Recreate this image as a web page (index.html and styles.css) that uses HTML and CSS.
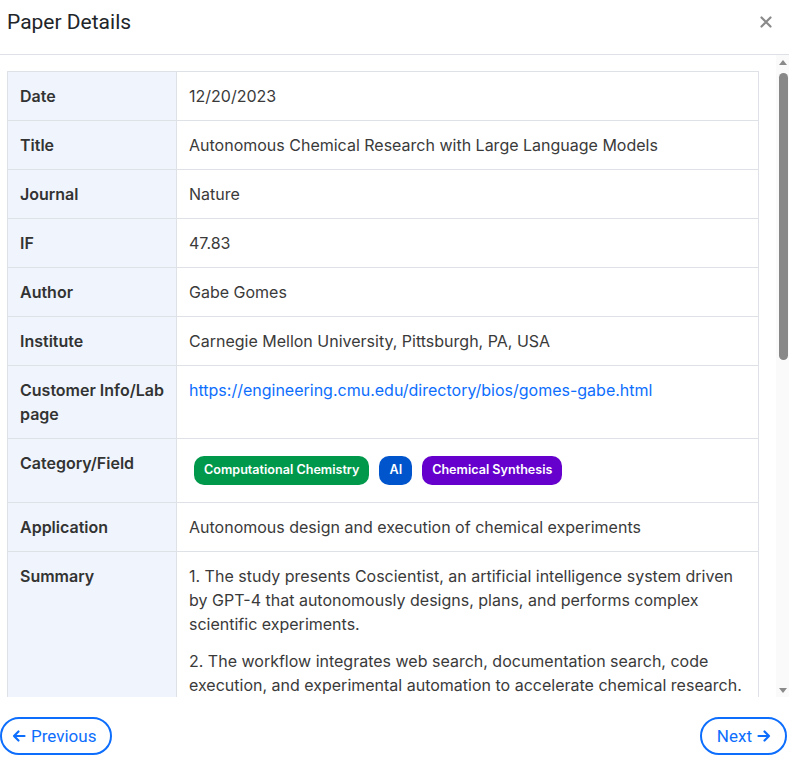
FILE: index.html
```html
<!DOCTYPE html>
<html lang="en">
<head>
<meta charset="utf-8">
<title>Paper Details</title>
<link rel="stylesheet" href="styles.css">
</head>
<body>
<div class="modal">
  <header class="modal-header">
    <h2 class="modal-title">Paper Details</h2>
    <button class="close-btn" aria-label="Close">
      <svg width="12" height="12" viewBox="0 0 12 12"><path d="M1.5 1.5 L10.5 10.5 M10.5 1.5 L1.5 10.5" stroke="#8a8a8a" stroke-width="2.2" stroke-linecap="round"/></svg>
    </button>
  </header>
  <div class="body-wrap">
    <div class="modal-body">
      <table class="details">
        <tbody>
          <tr><th>Date</th><td>12/20/2023</td></tr>
          <tr><th>Title</th><td>Autonomous Chemical Research with Large Language Models</td></tr>
          <tr><th>Journal</th><td>Nature</td></tr>
          <tr><th>IF</th><td>47.83</td></tr>
          <tr><th>Author</th><td>Gabe Gomes</td></tr>
          <tr><th>Institute</th><td>Carnegie Mellon University, Pittsburgh, PA, USA</td></tr>
          <tr><th>Customer Info/Lab page</th><td><a class="link" href="#">https://engineering.cmu.edu/directory/bios/gomes-gabe.html</a></td></tr>
          <tr><th>Category/Field</th><td><div class="tags"><span class="tag tag-green">Computational Chemistry</span><span class="tag tag-blue">AI</span><span class="tag tag-purple">Chemical Synthesis</span></div></td></tr>
          <tr><th>Application</th><td>Autonomous design and execution of chemical experiments</td></tr>
          <tr><th>Summary</th><td>
            <p>1. The study presents Coscientist, an artificial intelligence system driven by GPT-4 that autonomously designs, plans, and performs complex scientific experiments.</p>
            <p>2. The workflow integrates web search, documentation search, code execution, and experimental automation to accelerate chemical research.</p>
            <p>3. Coscientist successfully optimized palladium-catalysed cross-coupling reactions, demonstrating reasoning about reaction conditions and yields.</p>
          </td></tr>
        </tbody>
      </table>
    </div>
    <div class="scrollbar" aria-hidden="true">
      <div class="sb-arrow sb-up"></div>
      <div class="sb-track"><div class="sb-thumb"></div></div>
      <div class="sb-arrow sb-down"></div>
    </div>
  </div>
  <footer class="modal-footer">
    <button class="nav-btn nav-prev">
      <svg width="14" height="14" viewBox="0 0 14 14"><path d="M12.5 7 H2 M6.5 2.5 L2 7 L6.5 11.5" fill="none" stroke="currentColor" stroke-width="2.2" stroke-linecap="round" stroke-linejoin="round"/></svg>
      <span>Previous</span>
    </button>
    <button class="nav-btn nav-next">
      <span>Next</span>
      <svg width="14" height="14" viewBox="0 0 14 14"><path d="M1.5 7 H12 M7.5 2.5 L12 7 L7.5 11.5" fill="none" stroke="currentColor" stroke-width="2.2" stroke-linecap="round" stroke-linejoin="round"/></svg>
    </button>
  </footer>
</div>
</body>
</html>
```
FILE: styles.css
```css
html, body {
  margin: 0;
  padding: 0;
  background: #ffffff;
}

body {
  font-family: Inter, "Noto Sans", sans-serif;
  color: #333333;
}

.modal {
  height: 757px;
  display: flex;
  flex-direction: column;
  background: #ffffff;
}

.modal-header {
  height: 54px;
  flex: 0 0 54px;
  border-bottom: 1px solid #dee2e6;
  display: flex;
  align-items: center;
  justify-content: space-between;
  padding: 0 17px 0 7px;
  box-sizing: content-box;
}

.modal-title {
  margin: 0 0 10px 0;
  font-family: Roboto, "Liberation Sans", sans-serif;
  font-size: 21px;
  font-weight: 400;
  color: #212529;
  line-height: 24px;
}

.close-btn {
  border: 0;
  background: transparent;
  padding: 0;
  margin-bottom: 10px;
  width: 12px;
  height: 12px;
  display: flex;
  cursor: pointer;
}

.body-wrap {
  flex: 1 1 auto;
  min-height: 0;
  display: flex;
}

.modal-body {
  flex: 1 1 auto;
  min-width: 0;
  overflow: hidden;
  padding: 16px 17px 0 7px;
}

.scrollbar {
  flex: 0 0 13px;
  display: flex;
  flex-direction: column;
  background: #fafafa;
}

.sb-arrow {
  flex: 0 0 14px;
  display: flex;
  justify-content: center;
  align-items: center;
}

.sb-arrow::before {
  content: "";
  width: 0;
  height: 0;
  border-left: 4px solid transparent;
  border-right: 4px solid transparent;
  margin-left: 1px;
}

.sb-up::before {
  border-bottom: 5px solid #8a8a8a;
}

.sb-down::before {
  border-top: 5px solid #8a8a8a;
}

.sb-track {
  flex: 1 1 auto;
  padding: 4px 1px 0 3px;
}

.sb-thumb {
  height: 287px;
  background: #888888;
  border-radius: 5px;
}

.details {
  width: 100%;
  border-collapse: collapse;
  font-size: 16px;
  line-height: 24px;
}

.details th,
.details td {
  border: 1px solid #dee2e6;
  padding: 12px;
  text-align: left;
  vertical-align: top;
}

.details th {
  width: 144px;
  background: #f0f5fd;
  font-weight: 600;
  color: #333333;
}

.details td {
  color: #3a3a3a;
  font-weight: 400;
}

.details p {
  margin: 0 0 13px 0;
}

.details p:last-child {
  margin-bottom: 0;
}

.link {
  color: #0d6efd;
  text-decoration: none;
}

.tags {
  display: flex;
  flex-wrap: wrap;
  gap: 10px;
  margin: 5px;
}

.tag {
  display: inline-flex;
  align-items: center;
  height: 29px;
  padding: 0 10px;
  border-radius: 10px;
  color: #ffffff;
  font-size: 12.6px;
  font-weight: 600;
  line-height: 1;
}

.tag-green { background: #00994c; }
.tag-blue { background: #0055cc; }
.tag-purple { background: #6600cc; }

.modal-footer {
  flex: 0 0 auto;
  display: flex;
  justify-content: space-between;
  padding: 20px 2px 2px 0;
}

.nav-btn {
  display: inline-flex;
  align-items: center;
  gap: 5px;
  height: 38px;
  box-sizing: border-box;
  border: 2px solid #0d6efd;
  border-radius: 19px;
  background: #ffffff;
  color: #0d6efd;
  font-family: Roboto, "Liberation Sans", sans-serif;
  font-size: 17px;
  cursor: pointer;
}

.nav-prev {
  padding: 0 14px 0 10px;
}

.nav-next {
  padding: 0 14px 0 15px;
}
```
